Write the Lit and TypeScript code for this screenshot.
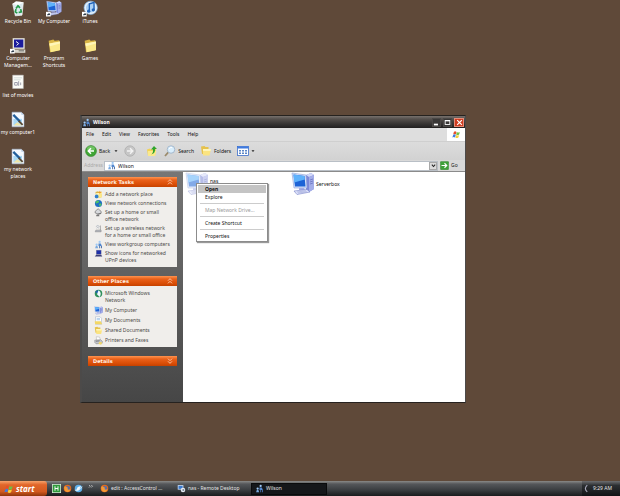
import { LitElement, html, svg, css, nothing } from "lit";
import { customElement, property } from "lit/decorators.js";

const monitor = (x: number, y: number) => svg`
  <g transform="translate(${x} ${y})">
    <path d="M15 3 L20 1 L23 3 L23 17 L18 20 L15 18Z" fill="#7d88d8"/>
    <path d="M15 3 L20 1 L23 3 L18 5Z" fill="#d3d9f8"/>
    <path d="M18 5 L23 3 L23 17 L18 20Z" fill="#a3ade9"/>
    <path d="M19 8l3-1M19 10l3-1M19 12l3-1" stroke="#5560b0" stroke-width=".6"/>
    <path d="M1 1 L15 3 L16 16 L3 16Z" fill="#d7e2fa" stroke="#8aa0d8" stroke-width=".6"/>
    <path d="M2.500 2.500 L13.500 4 L14.500 14.500 L4 14.500Z" fill="#1d63d6"/>
    <path d="M2.500 2.500 L13.500 4 L13.800 7.500 L3.200 10.500Z" fill="#5fb2fb"/>
    <path d="M8 16h5l1 2H8Z" fill="#a5aee6"/>
    <path d="M3 19 L16 17.500 L19 20 L6 22.500Z" fill="#dfe3fa" stroke="#7682c8" stroke-width=".6"/>
    <path d="M6 20l9-1.200M7 21l9-1.200" stroke="#8d97d0" stroke-width=".5"/>
  </g>`;

const shortcut = svg`
  <rect x="0" y="17" width="7" height="7" fill="#fff"/>
  <path d="M1.500 23 Q1.500 20 4 20 V18.500 L6.500 20.700 L4 22.600 V21.500 Q2.500 21.500 1.500 23Z" fill="#123"/>`;

const folder = svg`
  <path d="M4 5 L11 3 L13 5 L20 4 L20 19 L6 22Z" fill="#d9b545"/>
  <path d="M5 9 L21 6 L21 19 L7 22Z" fill="#fbe98a"/>
  <path d="M5 9 L21 6 L21 9 L6 13Z" fill="#fff6b8"/>`;

const people = svg`
  <circle cx="7" cy="12" r="3" fill="#9ec9f5"/><path d="M3 22 L5 15 H9 L11 22Z" fill="#79a9e0"/>
  <circle cx="15" cy="5" r="3" fill="#9ec9f5"/><path d="M12 9 H18 L21 16 H12Z" fill="#5187cf"/>
  <path d="M15 16v6M20 16v6" stroke="#4a6ea8" stroke-width="2.500"/>`;

const globe = svg`
  <circle cx="12" cy="12" r="9.500" fill="#1f6fc4"/>
  <path d="M5 6 Q10 2 14 5 L12 10 L6 12 L4 10Z" fill="#4fc066"/>
  <path d="M13 13 L19 11 L20 16 L15 20Z" fill="#4fc066"/>`;

const paintFile = svg`
  <path d="M3 1h14l4 4v18H3Z" fill="#f6faff" stroke="#9db4d0" stroke-width=".8"/>
  <path d="M17 1v4h4Z" fill="#b9cce4"/>
  <rect x="5" y="11" width="13" height="10" fill="#a9d8f4"/>
  <path d="M5 21 L11 16 L18 21Z" fill="#f0e6a8"/>
  <path d="M5 5 L15 15" stroke="#235f9c" stroke-width="3.500"/>
  <path d="M13 14 L19 20" stroke="#5a4630" stroke-width="2.500"/>`;

const firefox = svg`
  <circle cx="12" cy="12" r="10" fill="#e2681c"/><circle cx="13" cy="11" r="6" fill="#5a6ea8"/>
  <path d="M3 9 Q6 4 9 8 Q15 9 12 13 Q15 17 20 13 Q18 22 11 21 Q3 19 3 9Z" fill="#f49a35"/>`;

const flag = svg`
  <path d="M5 5 Q8 2 12 5 L10 12 Q7 9 3 12Z" fill="#e8502a"/>
  <path d="M13 5 Q17 8 21 5 L19 12 Q15 15 11 12Z" fill="#6fc045"/>
  <path d="M3 13 Q7 10 10 13 L8 20 Q5 17 1 20Z" fill="#3f7be0"/>
  <path d="M11 13 Q15 16 19 13 L17 20 Q12 23 9 20Z" fill="#f8cf3a"/>`;

const icons: Record<string, unknown> = {
  recycle: svg`
    <path d="M4 5 L20 3 L18 22 L8 23Z" fill="#dce9ee" stroke="#fff" stroke-width="1"/>
    <path d="M4 5 L9 1 L16 2 L20 3 L12 7Z" fill="#fbfdfd"/>
    <path d="M9 12l3-4 3 3M16 13l1 4-4 1M11 19l-3-2 1-4" stroke="#249a4a" stroke-width="2.500" fill="none"/>`,
  computer: monitor(0, 0),
  computerLink: svg`${monitor(0, 0)}${shortcut}`,
  itunes: svg`
    <circle cx="13" cy="11" r="10" fill="#e6f1fb" stroke="#7fb2e4"/>
    <circle cx="13" cy="11" r="7" fill="#a9d0f5"/>
    <path d="M11 16V5l7-2v11" stroke="#1f62b8" stroke-width="2" fill="none"/>
    <circle cx="10" cy="16" r="2.500" fill="#1f62b8"/><circle cx="17" cy="14" r="2.500" fill="#1f62b8"/>${shortcut}`,
  manage: svg`
    <rect x="4" y="1" width="18" height="16" fill="#e8e6dc"/><rect x="6" y="3" width="14" height="12" fill="#1b1b9c"/>
    <path d="M9 6l4 3-3 3" stroke="#fff" stroke-width="1.500" fill="none"/>
    <rect x="2" y="18" width="21" height="5" fill="#d8d6cc"/><path d="M13 20h8" stroke="#333"/>${shortcut}`,
  folder,
  textFile: svg`
    <path d="M4 1h16v20H4Z" fill="#fdfdf8" stroke="#bbb" stroke-width=".8"/>
    <path d="M6 5h12M6 8h10" stroke="#bcc" />
    <path d="M7 12h4v4H7zM13 10v7M16 12v4" stroke="#889" stroke-width="1.200" fill="none"/>`,
  paintFile,
  people,
  globe,
  addPlace: svg`${folder}<circle cx="7" cy="17" r="5" fill="#2f7fd0"/><path d="M15 1l2 4 4 1-4 2-1 4-2-4-4-1 4-2z" fill="#f29a28"/>`,
  homeNet: svg`
    <path d="M3 9 L11 2 L19 9 V14 L11 16 L3 13Z" fill="#d8dadd" stroke="#555" stroke-width="1.500"/>
    <path d="M8 20 Q12 14 18 15" stroke="#555" stroke-width="2" fill="none"/><rect x="6" y="18" width="8" height="4" fill="#777"/>`,
  wireless: svg`
    <path d="M5 16h14v5H3Z" fill="#b9bcc2" stroke="#777"/><path d="M17 16V4" stroke="#777" stroke-width="1.500"/>
    <path d="M7 11q3-4 6 0M5 7q5-6 10 0" stroke="#8b97a8" fill="none" stroke-width="1.500"/>`,
  upnp: svg`
    <rect x="6" y="3" width="13" height="11" fill="#1d2fa8" stroke="#889" /><path d="M2 20 L6 15 H19 L22 20Z" fill="#3c3f78"/>`,
  msNet: svg`
    <circle cx="12" cy="12" r="10" fill="#2f8f5a"/><path d="M3 8 Q8 2 13 4 L9 12Z" fill="#1d5fae"/>
    <path d="M12 3 Q22 9 15 21 L8 14Z" fill="#f2f8ff"/>`,
  docs: svg`<path d="M4 2h12l4 4v16H4Z" fill="#fff" stroke="#7d93b0"/><path d="M7 7h9M7 10h9" stroke="#6fa8dc" stroke-width="1.500"/><path d="M2 14 L18 14 L22 22 H3Z" fill="#f3d765"/>`,
  printer: svg`
    <path d="M6 2 L15 3 L17 11 L7 11Z" fill="#fff" stroke="#999"/><path d="M2 11 L18 10 L22 14 V19 L6 21 L2 17Z" fill="#c3c6cc" stroke="#666"/>
    <path d="M5 14l10-1" stroke="#444" stroke-width="1.500"/><path d="M14 15 L22 17 L19 23 L12 21Z" fill="#f2d76a"/>`,
  back: svg`
    <circle cx="12" cy="12" r="11" fill="#3fa535" stroke="#2a7a24" /><ellipse cx="12" cy="7" rx="8" ry="5" fill="#8dd67f" opacity=".6"/>
    <path d="M18 12H8M12 6.500L6.500 12l5.500 5.500" stroke="#fff" stroke-width="3" fill="none"/>`,
  forward: svg`
    <circle cx="12" cy="12" r="10.500" fill="#c6c6c6" stroke="#9c9c9c"/>
    <path d="M6 12h10M12 6.500L17.500 12 12 17.500" stroke="#f2f2f2" stroke-width="3" fill="none"/>`,
  up: svg`
    <path d="M2 9 L8 7 L10 9 L20 8 L18 22 L4 22Z" fill="#f2d355"/><path d="M4 12h17l-3 10H4Z" fill="#fbe98a"/>
    <path d="M10 19 Q15 16 14 9 H10 L16 2 L22 8 H18 Q19 17 10 19Z" fill="#2fa52c"/>`,
  search: svg`
    <path d="M9 14 L2 22" stroke="#9a8a6a" stroke-width="3.500"/>
    <circle cx="14" cy="9" r="7.500" fill="#d9eefc" stroke="#a4b8cc" stroke-width="2"/><path d="M10 8q2-4 6-3" stroke="#fff" stroke-width="2" fill="none"/>`,
  folders: svg`
    <path d="M2 3 L9 2 L11 4 L17 4 V17 L4 18Z" fill="#e6c24c"/><path d="M6 8 L22 8 L19 21 L6 21Z" fill="#fbe480"/>
    <path d="M6 8 L22 8 L21 12 H6Z" fill="#fff5b8"/>`,
  views: svg`
    <rect x="1" y="3" width="22" height="18" fill="#fff" stroke="#2f66c8" stroke-width="1.500"/><rect x="1" y="3" width="22" height="4" fill="#3f7be0"/>
    <path d="M4 10h4v3H4zM10 10h4v3h-4zM16 10h4v3h-4zM4 15h4v3H4zM10 15h4v3h-4zM16 15h4v3h-4z" fill="#5b86c6"/>`,
  flag,
  go: svg`
    <rect x="1" y="1" width="22" height="22" rx="2" fill="#3fa03a" stroke="#2b7a28"/>
    <path d="M4 12h13M12 6l6 6-6 6" stroke="#fff" stroke-width="3" fill="none"/>`,
  quickH: svg`
    <rect x="1" y="1" width="22" height="22" fill="#2f9a3c" stroke="#d9f2da" stroke-width="2"/>
    <path d="M8 6v12M16 6v12M8 12h8" stroke="#fff" stroke-width="2.500"/>`,
  firefox,
  browser: svg`
    <circle cx="12" cy="12" r="10" fill="#5fb0ea"/><path d="M5 18 L10 8 L19 5 L14 15Z" fill="#f4f9fd"/><path d="M2 16 Q12 22 22 7" stroke="#dff0fc" stroke-width="2" fill="none"/>`,
  remote: svg`
    <rect x="2" y="3" width="15" height="12" fill="#cfe0f5"/><rect x="4" y="5" width="11" height="8" fill="#3a78cc"/><circle cx="16" cy="16" r="6" fill="#e8eef7"/><path d="M13 16h6M17 14l2 2-2 2" stroke="#345" fill="none" stroke-width="1.500"/>`,
  tray: svg`<path d="M14 3 Q4 12 14 21" stroke="#aab" stroke-width="3" fill="none"/>`,
  collapse: svg`<path d="M6 11l6-6 6 6M6 19l6-6 6 6" stroke="#ffd9bd" stroke-width="2.500" fill="none"/>`,
  expand: svg`<path d="M6 5l6 6 6-6M6 13l6 6 6-6" stroke="#ffd9bd" stroke-width="2.500" fill="none"/>`,
  chevron: svg`<path d="M4 8l8 9 8-9" stroke="#222" stroke-width="5" fill="none"/>`,
  more: svg`<path d="M4 4l5 5-5 5M13 4l5 5-5 5" stroke="#eee" stroke-width="2.500" fill="none"/>`,
  arrow: svg`<path d="M3 8h18l-9 10z" fill="#222"/>`,
  minimize: svg`<rect x="3" y="16" width="14" height="6" fill="#fff"/>`,
  maximize: svg`<rect x="4" y="5" width="16" height="14" fill="none" stroke="#fff" stroke-width="3"/><path d="M4 6h16" stroke="#fff" stroke-width="4"/>`,
  close: svg`<path d="M4 4l16 16M20 4L4 20" stroke="#fff" stroke-width="4"/>`,
};

@customElement("xp-icon")
export class XpIcon extends LitElement {
  @property() name = "";
  static styles = css`
    :host { display: block; flex: none; width: 9px; height: 9px; }
    svg { display: block; width: 100%; height: 100%; }
  `;
  render() {
    return html`<svg viewBox="0 0 24 24" aria-hidden="true">${icons[this.name]}</svg>`;
  }
}

const base = css`
  * { box-sizing: border-box; }
  button, input, a { font: inherit; color: inherit; border: 0; padding: 0; margin: 0; background: none; text-decoration: none; text-align: left; }
  ul { list-style: none; margin: 0; padding: 0; }
`;

@customElement("task-group")
export class TaskGroup extends LitElement {
  @property() heading = "";
  @property({ attribute: false }) items: string[][] = [];
  static styles = [base, css`
    :host { display: block; }
    .head { display: flex; align-items: center; justify-content: space-between; width: 100%; height: 10px; padding: 0 3px 0 5px;
      color: #fff0e2; font-weight: 700; font-family: "DejaVu Sans", "Noto Sans", sans-serif;
      background: linear-gradient(#ff9450, #ea611a 30%, #d94d06 75%, #c54200); }
    .chev { width: 8px; height: 8px; }
    .list { display: flex; flex-direction: column; gap: 2px; padding: 4px 6px 3px; background: #f0eeeb; }
    :host([roomy]) .list { gap: 3px; }
    .link { display: flex; gap: 2px; color: #4c4a48; line-height: 7px; white-space: pre-line; }
    .link xp-icon { margin: -1px 0; }
  `];
  render() {
    return html`
      <button class="head">${this.heading}<xp-icon class="chev" name=${this.items.length ? "collapse" : "expand"}></xp-icon></button>
      ${this.items.length
        ? html`<ul class="list">${this.items.map(([icon, text]) => html`<li><a class="link" href="#"><xp-icon name=${icon}></xp-icon><span>${text}</span></a></li>`)}</ul>`
        : nothing}`;
  }
}

const desktopIcons: (string[] | null)[] = [
  ["recycle", "Recycle Bin"], ["computerLink", "My Computer"], ["itunes", "iTunes"],
  ["manage", "Computer\nManagem..."], ["folder", "Program\nShortcuts"], ["folder", "Games"],
  ["textFile", "list of movies"], null, null,
  ["paintFile", "my computer1"], null, null,
  ["paintFile", "my network\nplaces"],
];

const networkTasks = [
  ["addPlace", "Add a network place"],
  ["globe", "View network connections"],
  ["homeNet", "Set up a home or small\noffice network"],
  ["wireless", "Set up a wireless network\nfor a home or small office"],
  ["people", "View workgroup computers"],
  ["upnp", "Show icons for networked\nUPnP devices"],
];

const otherPlaces = [
  ["msNet", "Microsoft Windows\nNetwork"],
  ["computer", "My Computer"],
  ["docs", "My Documents"],
  ["folders", "Shared Documents"],
  ["printer", "Printers and Faxes"],
];

@customElement("explorer-window")
export class ExplorerWindow extends LitElement {
  static styles = [base, css`
    :host { display: flex; flex-direction: column; background: #d9d9d9; border: 1px solid #26221f; border-left: 2px solid #4c4a49; border-right: 1px solid #4c4a49; }
    .title { display: flex; align-items: center; gap: 2px; height: 12px; padding-right: 1px; color: #fff; font-weight: 700; background: linear-gradient(#77716d, #55504d 25%, #3a3736 60%, #201f1f); }
    .title h1 { flex: 1; margin: 0; font: inherit; }
    .ctl { display: grid; place-items: center; width: 9px; height: 9px; border: 1px solid #4a4745; background: #393736; }
    .ctl xp-icon { width: 7px; height: 7px; }
    .ctl.red { width: 10px; background: #cf3c20; border-color: #e88c78; }
    .menubar { display: flex; height: 13px; color: #111; background: #dedede; }
    .menus { flex: 1; display: flex; align-items: center; gap: 8px; padding-left: 4px; }
    .throbber { display: grid; place-items: center; width: 18px; background: #fff; }
    .tools { display: flex; align-items: center; height: 19px; padding-left: 3px; gap: 6px; background: linear-gradient(#dcdcdc, #d2d2d2); border-top: 1px solid #cfcfcf; color: #111; }
    .tool { display: flex; align-items: center; gap: 2px; }
    .tool xp-icon { width: 12px; height: 12px; }
    .tool .tiny { width: 4px; height: 4px; }
    .tool:first-child .tiny { margin-left: 2px; }
    .tool.split { padding-right: 4px; }
    .address { display: flex; align-items: center; height: 11px; padding-left: 2px; background: #d9d9d9; color: #aaa; }
    .address label { width: 20px; }
    .field { flex: 1; display: flex; align-items: center; gap: 2px; height: 10px; padding-left: 2px; background: #fff; border: 1px solid #b9bfc6; color: #111; }
    .field input { flex: 1; min-width: 0; height: 8px; outline: 0; }
    .drop { display: grid; place-items: center; width: 8px; height: 8px; background: #dcdcdc; border: 1px solid #a8a8a8; }
    .drop xp-icon { width: 5px; height: 5px; }
    .go { display: flex; align-items: center; gap: 2px; width: 27px; padding-left: 2px; color: #222; }
    .body { flex: 1; display: flex; border-top: 1px solid #8b8b8b; }
    .side { flex: none; width: 101px; display: flex; flex-direction: column; gap: 9px; padding: 5px 6px 12px; background: linear-gradient(#767676, #464646); }
    .pane { flex: 1; display: grid; grid-template-columns: repeat(auto-fill, 106px); align-content: start; padding: 0 2px; background: #fff; color: #111; }
    .machine { display: flex; align-items: center; gap: 1px; height: 24px; }
    .machine xp-icon { width: 24px; height: 24px; }
    .machine.ghost xp-icon { opacity: .55; }
    .machine.ghost span { padding-bottom: 6px; }
  `];
  render() {
    return html`
      <header class="title">
        <xp-icon name="people"></xp-icon><h1>Wilson</h1>
        <button class="ctl" aria-label="Minimize"><xp-icon name="minimize"></xp-icon></button>
        <button class="ctl" aria-label="Maximize"><xp-icon name="maximize"></xp-icon></button>
        <button class="ctl red" aria-label="Close"><xp-icon name="close"></xp-icon></button>
      </header>
      <div class="menubar">
        <nav class="menus">${["File", "Edit", "View", "Favorites", "Tools", "Help"].map((m) => html`<button>${m}</button>`)}</nav>
        <div class="throbber"><xp-icon name="flag"></xp-icon></div>
      </div>
      <div class="tools">
        <button class="tool"><xp-icon name="back"></xp-icon>Back<xp-icon class="tiny" name="arrow"></xp-icon></button>
        <button class="tool split" aria-label="Forward"><xp-icon name="forward"></xp-icon></button>
        <button class="tool" aria-label="Up"><xp-icon name="up"></xp-icon></button>
        <button class="tool"><xp-icon name="search"></xp-icon>Search</button>
        <button class="tool"><xp-icon name="folders"></xp-icon>Folders</button>
        <button class="tool" aria-label="Views"><xp-icon name="views"></xp-icon><xp-icon class="tiny" name="arrow"></xp-icon></button>
      </div>
      <div class="address">
        <label for="addr">Address</label>
        <div class="field">
          <xp-icon name="people"></xp-icon><input id="addr" value="Wilson">
          <button class="drop" aria-label="Show addresses"><xp-icon name="chevron"></xp-icon></button>
        </div>
        <button class="go"><xp-icon name="go"></xp-icon>Go</button>
      </div>
      <div class="body">
        <aside class="side">
          <task-group heading="Network Tasks" .items=${networkTasks}></task-group>
          <task-group roomy heading="Other Places" .items=${otherPlaces}></task-group>
          <task-group heading="Details"></task-group>
        </aside>
        <main class="pane">
          <button class="machine ghost"><xp-icon name="computer"></xp-icon><span>nas</span></button>
          <button class="machine"><xp-icon name="computer"></xp-icon><span>Serverbox</span></button>
        </main>
      </div>`;
  }
}

@customElement("app-root")
export class AppRoot extends LitElement {
  static styles = [base, css`
    :host { display: flex; flex-direction: column; min-height: 100vh; position: relative; background: #5f4939; font: 5px/7px "Noto Sans", "Open Sans", sans-serif; }
    .desk { flex: 1; display: grid; grid-template-columns: repeat(3, 36px); grid-auto-rows: 37px; align-content: start; }
    .item { display: flex; flex-direction: column; align-items: center; gap: 1px; color: #fff; text-align: center; white-space: pre; }
    .item xp-icon { width: 16px; height: 17px; }
    .window { position: absolute; inset: 115px 154px 93px 80px; }
    .popup { position: absolute; left: 196px; top: 183px; width: 72px; padding: 1px; background: #fff; border: 1px solid #8c8c8c; box-shadow: 1px 1px 1px #0006; color: #111; }
    .popup button { display: block; width: 100%; height: 8px; padding-left: 7px; }
    .popup .on { background: #c4c4c4; font-weight: 700; }
    .popup button:disabled { color: #999; }
    .popup hr { height: 1px; margin: 2px; border: 0; background: #ccc; }
    .bar { display: flex; align-items: center; height: 15px; color: #e6e6e6; background: linear-gradient(#8a8a88, #55575a 20%, #3a3d40 60%, #191b1d); }
    .start { display: flex; align-items: center; gap: 2px; width: 47px; height: 15px; padding-left: 4px; color: #fff; font: italic 700 8px/12px "Open Sans", "Noto Sans", sans-serif; background: linear-gradient(#f6a36c, #e2662a 25%, #d35a20 70%, #8e350c); border-radius: 0 3px 3px 0; }
    .start xp-icon { width: 10px; height: 10px; }
    .quick { display: flex; align-items: center; gap: 2px; width: 50px; padding-left: 5px; }
    .quick .more { width: 6px; height: 6px; margin-left: 3px; margin-bottom: 4px; }
    .tasks { flex: 1; display: flex; gap: 1px; }
    .task { display: flex; align-items: center; gap: 2px; flex: 0 1 76px; height: 12px; padding-left: 3px; white-space: nowrap; }
    .task.on { background: #15171a; border: 1px solid #0a0b0c; }
    .tray { display: flex; align-items: center; gap: 2px; align-self: stretch; padding: 0 8px 0 0; background: linear-gradient(#6d6e70, #2c2f32 30%, #111315); }
  `];
  render() {
    return html`
      <div class="desk">
        ${desktopIcons.map((d) => d ? html`<button class="item"><xp-icon name=${d[0]}></xp-icon><span>${d[1]}</span></button>` : html`<span></span>`)}
      </div>
      <explorer-window class="window"></explorer-window>
      <div class="popup" role="menu">
        <button role="menuitem" class="on">Open</button>
        <button role="menuitem">Explore</button>
        <hr>
        <button role="menuitem" disabled>Map Network Drive...</button>
        <hr>
        <button role="menuitem">Create Shortcut</button>
        <hr>
        <button role="menuitem">Properties</button>
      </div>
      <footer class="bar">
        <button class="start"><xp-icon name="flag"></xp-icon>start</button>
        <div class="quick">
          <xp-icon name="quickH"></xp-icon><xp-icon name="firefox"></xp-icon><xp-icon name="browser"></xp-icon><xp-icon class="more" name="more"></xp-icon>
        </div>
        <div class="tasks">
          <button class="task"><xp-icon name="firefox"></xp-icon>edit : AccessControl ...</button>
          <button class="task"><xp-icon name="remote"></xp-icon>nas - Remote Desktop</button>
          <button class="task on"><xp-icon name="people"></xp-icon>Wilson</button>
        </div>
        <div class="tray"><xp-icon name="tray"></xp-icon><time>9:29 AM</time></div>
      </footer>`;
  }
}
